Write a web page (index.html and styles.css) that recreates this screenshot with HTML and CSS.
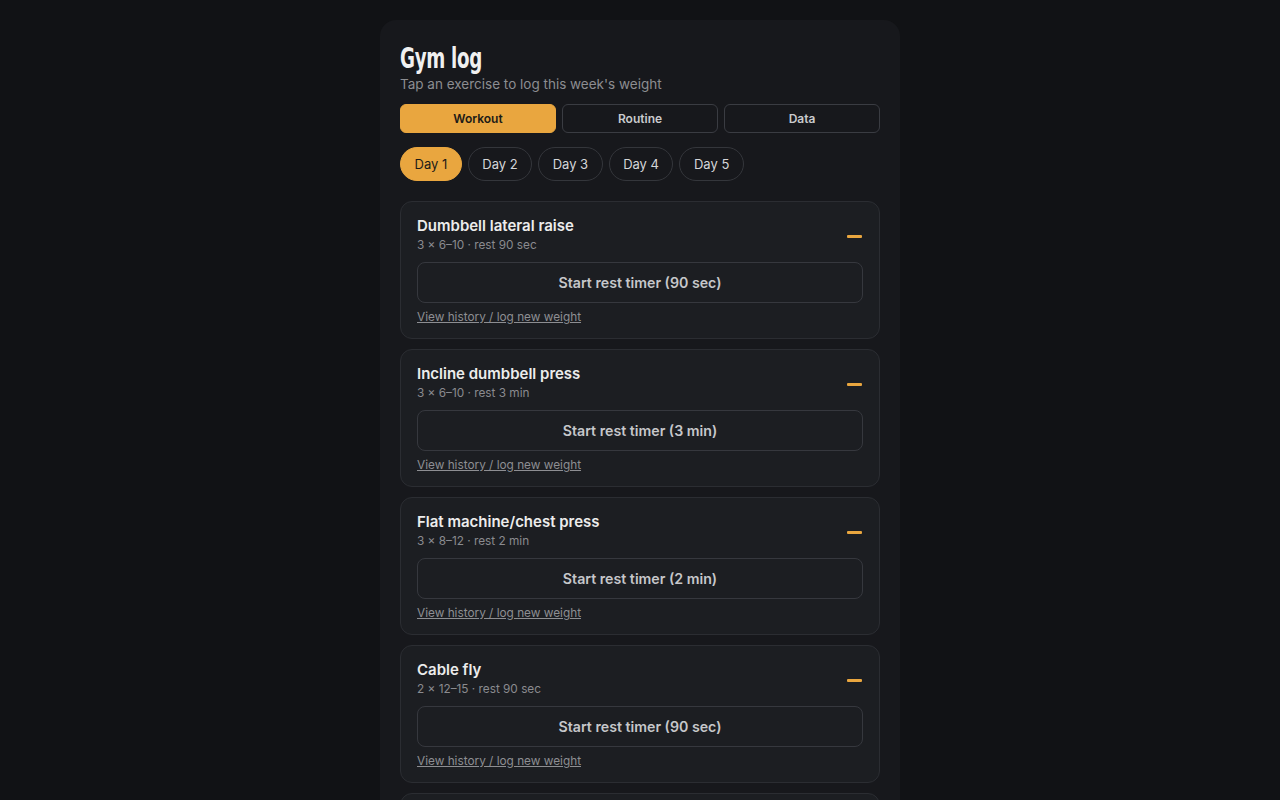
FILE: index.html
```html
<!DOCTYPE html>
<html lang="en">
<head>
  <meta charset="UTF-8">
  <title>Gym log</title>
  <meta name="viewport" content="width=device-width, initial-scale=1.0">
  <link rel="stylesheet" href="styles.css">
</head>
<body>

<div class="container">
  <h1>Gym log</h1>
  <p class="subtitle">Tap an exercise to log this week's weight</p>

  <!-- Main tabs -->
  <div class="tabs">
    <button class="tab active">Workout</button>
    <button class="tab">Routine</button>
    <button class="tab">Data</button>
  </div>

  <!-- Day selector -->
  <div class="days">
    <button class="day active">Day 1</button>
    <button class="day">Day 2</button>
    <button class="day">Day 3</button>
    <button class="day">Day 4</button>
    <button class="day">Day 5</button>
  </div>

  <div class="exercises">
    <div class="card">
      <div class="card-head">
        <div>
          <div class="name">Dumbbell lateral raise</div>
          <div class="meta">3 × 6–10 · rest 90 sec</div>
        </div>
        <span class="collapse"></span>
      </div>
      <button class="timer-btn">Start rest timer (90 sec)</button>
      <a class="history" href="#">View history / log new weight</a>
    </div>

    <div class="card">
      <div class="card-head">
        <div>
          <div class="name">Incline dumbbell press</div>
          <div class="meta">3 × 6–10 · rest 3 min</div>
        </div>
        <span class="collapse"></span>
      </div>
      <button class="timer-btn">Start rest timer (3 min)</button>
      <a class="history" href="#">View history / log new weight</a>
    </div>

    <div class="card">
      <div class="card-head">
        <div>
          <div class="name">Flat machine/chest press</div>
          <div class="meta">3 × 8–12 · rest 2 min</div>
        </div>
        <span class="collapse"></span>
      </div>
      <button class="timer-btn">Start rest timer (2 min)</button>
      <a class="history" href="#">View history / log new weight</a>
    </div>

    <div class="card">
      <div class="card-head">
        <div>
          <div class="name">Cable fly</div>
          <div class="meta">2 × 12–15 · rest 90 sec</div>
        </div>
        <span class="collapse"></span>
      </div>
      <button class="timer-btn">Start rest timer (90 sec)</button>
      <a class="history" href="#">View history / log new weight</a>
    </div>

    <div class="card">
      <div class="card-head">
        <div>
          <div class="name">Triceps pushdown</div>
          <div class="meta">3 × 10–12 · rest 90 sec</div>
        </div>
        <span class="collapse"></span>
      </div>
      <button class="timer-btn">Start rest timer (90 sec)</button>
      <a class="history" href="#">View history / log new weight</a>
    </div>
  </div>
</div>

</body>
</html>
```

FILE: styles.css
```css
body {
  margin: 0;
  padding: 20px 0;
  background-color: #111215;
  font-family: Inter, "Noto Sans", sans-serif;
  color: #e8e8e8;
}

.container {
  width: 480px;
  margin: 0 auto;
  padding: 20px;
  background-color: #17181c;
  border-radius: 16px;
}

h1 {
  margin: 0;
  padding-top: 1px;
  font-family: "DejaVu Sans", sans-serif;
  font-weight: bold;
  font-size: 29px;
  line-height: 34px;
  letter-spacing: -0.5px;
  color: #f0f0f0;
  transform: scaleX(0.63);
  transform-origin: left center;
}

.subtitle {
  margin: 1px 0 0;
  font-size: 13.5px;
  line-height: 17px;
  color: #8c8d91;
}

.tabs {
  display: grid;
  grid-template-columns: 1fr 1fr 1fr;
  gap: 6px;
  margin-top: 11px;
}

.tab {
  height: 29px;
  font-family: inherit;
  font-size: 12px;
  font-weight: 600;
  color: #c9cacd;
  background: transparent;
  border: 1px solid #3a3c42;
  border-radius: 6px;
  cursor: pointer;
}

.tab.active {
  background-color: #e9a63f;
  border-color: #e9a63f;
  color: #1b1a17;
}

.days {
  display: flex;
  gap: 6px;
  margin-top: 14px;
}

.day {
  height: 34px;
  padding: 0 13.5px;
  font-family: inherit;
  font-size: 13px;
  color: #d4d5d8;
  background: transparent;
  border: 1px solid #34363b;
  border-radius: 17px;
  cursor: pointer;
}

.day.active {
  background-color: #e9a63f;
  border-color: #e9a63f;
  color: #1b1a17;
}

.exercises {
  display: flex;
  flex-direction: column;
  gap: 10px;
  margin-top: 20px;
}

.card {
  display: flex;
  flex-direction: column;
  padding: 14px 16px 13px;
  background-color: #1c1e22;
  border: 1px solid #2b2d32;
  border-radius: 12px;
}

.card-head {
  display: flex;
  justify-content: space-between;
  align-items: center;
}

.name {
  font-size: 15px;
  font-weight: 600;
  line-height: 20px;
  color: #ececec;
}

.meta {
  margin-top: 1px;
  font-size: 11.8px;
  line-height: 16px;
  color: #8a8b8f;
}

.collapse {
  display: block;
  width: 15px;
  height: 3px;
  margin-right: 1px;
  margin-top: 4px;
  background-color: #e9a63f;
  border-radius: 1px;
}

.timer-btn {
  height: 41px;
  margin-top: 9px;
  font-family: inherit;
  font-size: 14.2px;
  font-weight: 600;
  color: #c6c7ca;
  background: transparent;
  border: 1px solid #36383e;
  border-radius: 8px;
  cursor: pointer;
}

.history {
  align-self: flex-start;
  margin-top: 6px;
  font-size: 11.8px;
  line-height: 16px;
  color: #8d8e92;
}
```
